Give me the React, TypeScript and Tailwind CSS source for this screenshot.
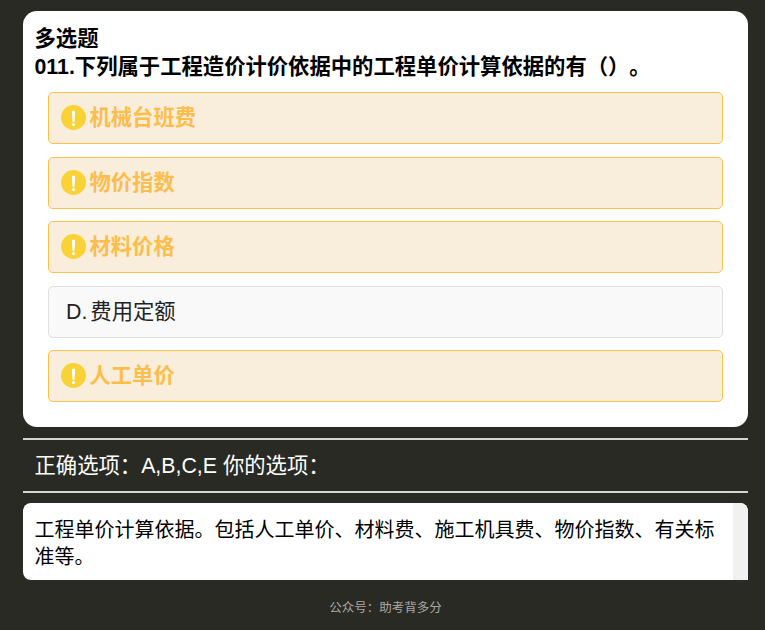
const options = [
  { text: "机械台班费", picked: true },
  { text: "物价指数", picked: true },
  { text: "材料价格", picked: true },
  { text: "费用定额", label: "D.", picked: false },
  { text: "人工单价", picked: true },
];

const WarnIcon = () => (
  <svg width="25" height="25" viewBox="0 0 25 25" className="mb-px shrink-0">
    <circle cx="12.5" cy="12.5" r="12.5" fill="#f9d237" />
    <path d="M10.9 7.2a1.6 1.6 0 0 1 3.2 0l-.6 9a1 1 0 0 1-2 0z" fill="#fff" />
    <circle cx="12.5" cy="19.6" r="1.6" fill="#fff" />
  </svg>
);

export default function App() {
  return (
    <div className="min-h-[630px] bg-[#2a2a24] pl-[23px] pr-[17px] pt-[11px] font-['Liberation_Sans','Noto_Sans_CJK_SC',sans-serif] [text-spacing-trim:space-all]">
      <div className="rounded-[14px] bg-white pl-[11.5px] pr-[25px] pt-[14px] pb-[25px]">
        <div className="text-[21.33px] leading-[28px] font-bold text-black">
          <div>多选题</div>
          <div>011.下列属于工程造价计价依据中的工程单价计算依据的有（）。</div>
        </div>
        <div className="mt-[11px] ml-[13.5px] flex flex-col gap-[12.6px]">
          {options.map((opt) =>
            opt.picked ? (
              <div
                key={opt.text}
                className="flex h-[52px] items-center gap-[3.4px] rounded-[5px] border border-[#fcc04d] bg-[#f9eddc] pl-3 text-[21.33px] font-bold text-[#fcbd4b]"
              >
                <WarnIcon />
                <span className="pt-[2px]">{opt.text}</span>
              </div>
            ) : (
              <div
                key={opt.text}
                className="flex h-[52px] items-center rounded-[5px] border border-[#dfdfdf] bg-[#f9f9f9] pl-[17px] text-[21.33px] text-[#222]"
              >
                <span className="mr-[3px] pt-[2px]">{opt.label}</span>
                <span className="pt-[2px]">{opt.text}</span>
              </div>
            )
          )}
        </div>
      </div>
      <div className="mt-[11px] flex h-[55px] items-center border-y-2 border-[#d4d4d0] pl-[11.5px] pt-[2px] text-[21.33px] text-white">
        正确选项：A,B,C,E 你的选项：
      </div>
      <div className="mt-[10px] flex h-[77px] overflow-hidden rounded-tl-[8px] rounded-tr-[8px] rounded-bl-[8px] bg-white">
        <div className="flex-1 pl-[11.5px] pr-4 pt-[14px] text-[20px] leading-[27px] text-black">
          工程单价计算依据。包括人工单价、材料费、施工机具费、物价指数、有关标准等。
        </div>
        <div className="w-[15px] bg-[#f1f1f1]" />
      </div>
      <div className="mt-[20px] text-center text-[12.5px] leading-[16px] text-[#a9a9a5]">
        公众号：助考背多分
      </div>
    </div>
  );
}
